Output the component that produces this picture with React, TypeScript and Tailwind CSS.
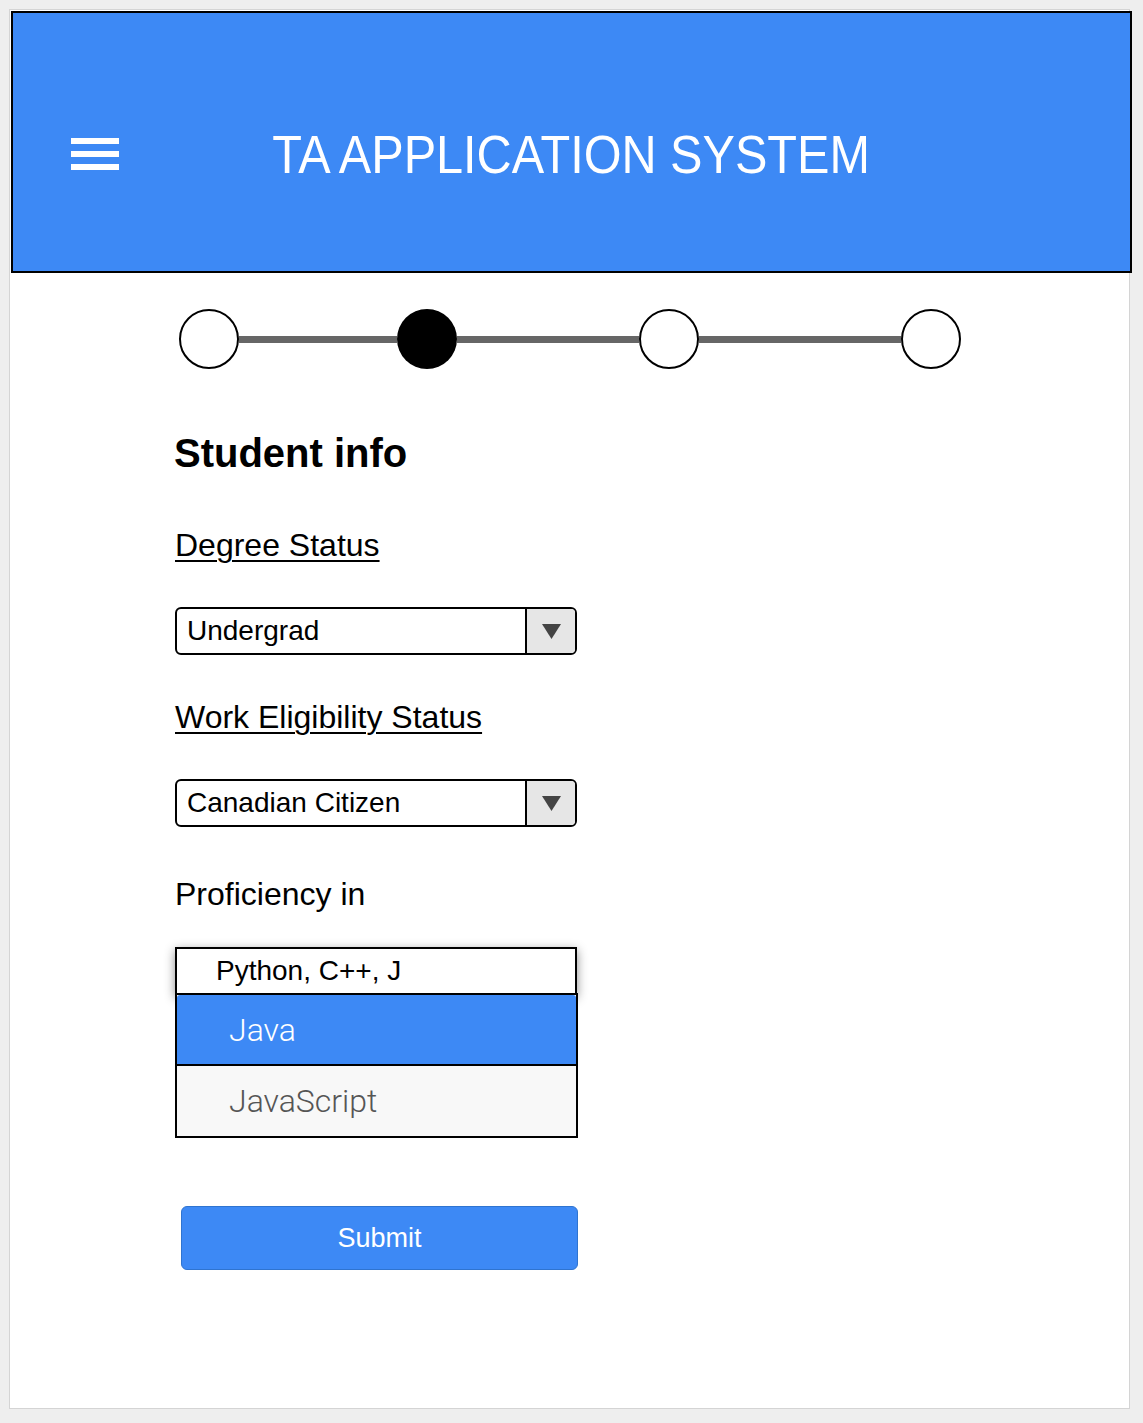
const arial = "font-['Liberation_Sans',Arial,sans-serif]";

function Select({ value }: { value: string }) {
  return (
    <div className="flex h-[48px] w-[402px] rounded-[6px] border-2 border-black bg-white">
      <div className={`flex flex-1 items-center pl-[10px] text-[28px] text-black ${arial}`}>{value}</div>
      <div className="flex w-[50px] items-center justify-center rounded-r-[4px] border-l-2 border-black bg-[#e6e6e6]">
        <svg width="19" height="15" viewBox="0 0 19 15">
          <path d="M0 0 H19 L9.5 15 Z" fill="#444" />
        </svg>
      </div>
    </div>
  );
}

function Label({ text, underline = true, className = "" }: { text: string; underline?: boolean; className?: string }) {
  return (
    <div className={`text-[32px] leading-none text-black ${arial} ${underline ? "underline underline-offset-[4px] decoration-2" : ""} ${className}`}>
      {text}
    </div>
  );
}

export default function App() {
  return (
    <div className="min-h-[1423px] w-full bg-[#eeeeee] pl-[9px] pt-[9px]">
      <div className="h-[1400px] w-[1121px] border border-[#d4d4d4] bg-white">
        {/* header */}
        <header className="ml-[1px] mt-[1px] grid h-[262px] w-[1121px] grid-cols-[1fr_auto_1fr] items-center border-2 border-black bg-[#3d89f5] pt-[24px]">
          <div className="flex flex-col gap-[7px] pl-[58px]">
            <span className="block h-[6px] w-[48px] bg-white" />
            <span className="block h-[6px] w-[48px] bg-white" />
            <span className="block h-[6px] w-[48px] bg-white" />
          </div>
          <h1 className={`origin-center scale-x-[0.9] text-[54px] leading-none text-white ${arial}`}>
            TA APPLICATION SYSTEM
          </h1>
          <div />
        </header>

        {/* stepper */}
        <div className="ml-[169px] mt-[36px] flex items-center">
          <div className="h-[60px] w-[60px] rounded-full border-2 border-black bg-white" />
          <div className="h-[7px] w-[158px] bg-[#666666]" />
          <div className="h-[60px] w-[60px] rounded-full bg-black" />
          <div className="h-[7px] w-[182px] bg-[#666666]" />
          <div className="h-[60px] w-[60px] rounded-full border-2 border-black bg-white" />
          <div className="h-[7px] w-[202px] bg-[#666666]" />
          <div className="h-[60px] w-[60px] rounded-full border-2 border-black bg-white" />
        </div>

        {/* form */}
        <div className="ml-[165px] flex flex-col">
          <h2 className={`-ml-[1px] mt-[64px] text-[40px] font-bold leading-none text-black ${arial}`}>Student info</h2>

          <Label text="Degree Status" className="mt-[56px]" />
          <div className="mt-[46px]">
            <Select value="Undergrad" />
          </div>

          <Label text="Work Eligibility Status" className="mt-[46px]" />
          <div className="mt-[46px]">
            <Select value="Canadian Citizen" />
          </div>

          <Label text="Proficiency in" underline={false} className="mt-[51px]" />
          <div className="relative mt-[37px] w-[403px]">
            <div className={`flex h-[48px] w-[402px] items-center border-2 border-black bg-white pl-[39px] text-[28px] text-black shadow-[0_3px_10px_rgba(0,0,0,0.45)] ${arial}`}>
              Python, C++, J
            </div>
            <div className="relative -mt-[2px] w-[403px] border-2 border-black bg-[#f8f8f8] font-['Roboto',sans-serif] text-[32px] font-light">
              <div className="flex h-[71px] items-center rounded-t-[3px] border-b-2 border-black bg-[#3d89f5] pl-[52px] text-white">
                Java
              </div>
              <div className="flex h-[70px] items-center pl-[52px] text-[#555555]">JavaScript</div>
            </div>
          </div>

          <button
            className={`ml-[6px] mt-[68px] h-[64px] w-[397px] rounded-[6px] border border-[#2f74d0] bg-[#3d89f5] text-[27px] text-white ${arial}`}
          >
            Submit
          </button>
        </div>
      </div>
    </div>
  );
}
